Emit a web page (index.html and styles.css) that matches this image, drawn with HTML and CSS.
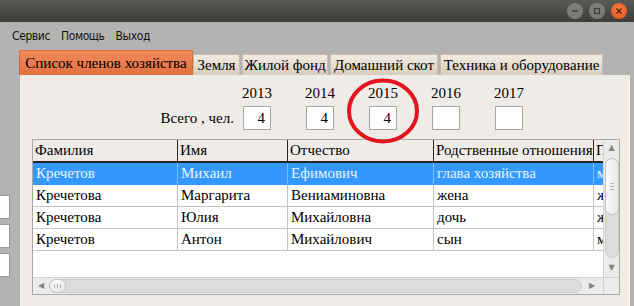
FILE: index.html
```html
<!DOCTYPE html>
<html lang="ru">
<head>
    <meta charset="UTF-8">
    <title>Хозяйство</title>
    <link rel="stylesheet" href="styles.css">
</head>
<body>
    <div class="titlebar">
        <span class="wbtn">
            <svg width="8" height="8" viewBox="0 0 8 8"><line x1="1" y1="4" x2="7" y2="4" stroke="#3c3b37" stroke-width="1.4"/></svg>
        </span>
        <span class="wbtn">
            <svg width="8" height="8" viewBox="0 0 8 8"><rect x="1.5" y="1.5" width="5" height="5" fill="none" stroke="#3c3b37" stroke-width="1.2"/></svg>
        </span>
        <span class="wbtn close">
            <svg width="8" height="8" viewBox="0 0 8 8"><path d="M1.5 1.5 L6.5 6.5 M6.5 1.5 L1.5 6.5" stroke="#5a2108" stroke-width="1.4"/></svg>
        </span>
    </div>

    <nav class="menubar">
        <span>Сервис</span>
        <span>Помощь</span>
        <span>Выход</span>
    </nav>

    <div class="window-body">
        <div class="side">
            <div class="stub"></div>
            <div class="stub"></div>
            <div class="stub"></div>
        </div>

        <div class="panel">
            <div class="tabs">
                <div class="tab active">Список членов хозяйства</div>
                <div class="tab tab-land">Земля</div>
                <div class="tab tab-housing">Жилой фонд</div>
                <div class="tab tab-cattle">Домашний скот</div>
                <div class="tab tab-machines">Техника и оборудование</div>
            </div>

            <div class="page">
                <div class="totals">
                    <div class="totals-label">Всего , чел.</div>
                    <div class="years">
                        <div class="year"><span>2013</span><input class="count" value="4" readonly></div>
                        <div class="year"><span>2014</span><input class="count" value="4" readonly></div>
                        <div class="year"><span>2015</span><input class="count" value="4" readonly></div>
                        <div class="year"><span>2016</span><input class="count" value="" readonly></div>
                        <div class="year"><span>2017</span><input class="count" value="" readonly></div>
                    </div>
                </div>

                <div class="grid">
                    <div class="grid-data">
                        <div class="grid-row head">
                            <span>Фамилия</span><span>Имя</span><span>Отчество</span><span>Родственные отношения</span><span>Пол</span>
                        </div>
                        <div class="grid-row selected">
                            <span>Кречетов</span><span>Михаил</span><span>Ефимович</span><span>глава хозяйства</span><span>мужской</span>
                        </div>
                        <div class="grid-row">
                            <span>Кречетова</span><span>Маргарита</span><span>Вениаминовна</span><span>жена</span><span>женский</span>
                        </div>
                        <div class="grid-row">
                            <span>Кречетова</span><span>Юлия</span><span>Михайловна</span><span>дочь</span><span>женский</span>
                        </div>
                        <div class="grid-row">
                            <span>Кречетов</span><span>Антон</span><span>Михайлович</span><span>сын</span><span>мужской</span>
                        </div>
                    </div>

                    <div class="vscroll">
                        <div class="arrow">&#9650;</div>
                        <div class="vtrack">
                            <div class="vthumb"><i></i><i></i><i></i></div>
                        </div>
                        <div class="arrow">&#9660;</div>
                    </div>

                    <div class="hscroll">
                        <div class="arrow">&#9664;</div>
                        <div class="htrack">
                            <div class="hthumb"><i></i><i></i><i></i></div>
                        </div>
                        <div class="arrow">&#9654;</div>
                    </div>

                    <div class="corner"></div>
                </div>
            </div>
        </div>
    </div>

    <!-- red annotation round the 2015 field -->
    <svg class="mark" width="76" height="68" viewBox="0 0 76 68">
        <ellipse cx="37" cy="33" rx="34" ry="30.5" fill="none" stroke="#e3141f" stroke-width="4"/>
    </svg>
</body>
</html>
```

FILE: styles.css
```css
body {
    margin: 0;
    width: 634px;
    height: 306px;
    overflow: hidden;
    position: relative;
    background: #b3b3b3;
    font-family: "Liberation Serif", serif;
    color: #000;
}
.titlebar {
    height: 22px;
    background: linear-gradient(#5a5955, #3e3d39);
    display: flex;
    justify-content: flex-end;
    align-items: center;
    gap: 6px;
    padding-right: 7px;
}
.wbtn {
    width: 16px;
    height: 16px;
    border-radius: 50%;
    background: #7d7c77;
    display: flex;
    align-items: center;
    justify-content: center;
}
.wbtn.close {
    background: radial-gradient(circle at 50% 35%, #f57c47, #e05419);
}
.menubar {
    height: 28px;
    display: flex;
    align-items: center;
    gap: 11px;
    padding-left: 12px;
    font-family: "DejaVu Sans Condensed", "DejaVu Sans", sans-serif;
    font-stretch: condensed;
    font-size: 12px;
    letter-spacing: -0.4px;
    color: #151515;
}
.window-body {
    display: flex;
}
.side {
    width: 20px;
    padding-top: 145px;
    display: flex;
    flex-direction: column;
    gap: 5px;
}
.stub {
    width: 10px;
    height: 24px;
    box-sizing: border-box;
    background: #fff;
    border: 1px solid #999;
    border-left: none;
}
.panel {
    width: 610px;
    display: flex;
    flex-direction: column;
}
.tabs {
    height: 25px;
    display: flex;
    align-items: flex-end;
    gap: 2px;
    margin-left: -1px;
}
.tab {
    height: 21px;
    line-height: 21px;
    box-sizing: border-box;
    text-align: center;
    white-space: nowrap;
    font-size: 15px;
    background: linear-gradient(#f1ece3, #d8cdbb);
    border: 1px solid #cbbfa9;
    border-bottom: none;
    border-radius: 2px 2px 0 0;
}
.tab.active {
    width: 174px;
    height: 25px;
    line-height: 24px;
    margin-right: -2px;
    background: linear-gradient(#f28a5c, #e2703f);
    border-color: #d66a3c;
}
.tab-land { width: 47px; }
.tab-housing { width: 86px; }
.tab-cattle { width: 108px; }
.tab-machines { width: 163px; }
.page {
    height: 240px;
    padding-top: 9px;
    background: #efebe7;
    border-right: 1px solid #f8f6f3;
    font-size: 15px;
}
.totals {
    display: flex;
    align-items: flex-end;
}
.totals-label {
    width: 214px;
    padding-right: 9px;
    text-align: right;
    line-height: 24px;
}
.years {
    display: flex;
    gap: 35px;
}
.year {
    width: 28px;
    display: flex;
    flex-direction: column;
    align-items: center;
}
.year span {
    line-height: 18px;
    margin-bottom: 4px;
}
.count {
    width: 28px;
    height: 24px;
    box-sizing: border-box;
    margin: 0;
    padding: 0 5px 0 0;
    border: 1px solid #a6a6a6;
    background: #fff;
    text-align: right;
    font-family: "Liberation Serif", serif;
    font-size: 15px;
    color: #000;
    outline: none;
}
.grid {
    width: 588px;
    box-sizing: border-box;
    margin: 9px 0 0 12px;
    display: grid;
    grid-template-columns: minmax(0, 1fr) 16px;
    grid-template-rows: 137px 17px;
    border: 1px solid #a9a9a9;
    background: #fff;
}
.grid-data {
    overflow: hidden;
}
.grid-row {
    display: grid;
    grid-template-columns: 145px 110px 146px 160px minmax(0, 1fr);
    height: 22px;
}
.grid-row span {
    padding-left: 3px;
    line-height: 21px;
    white-space: nowrap;
    overflow: hidden;
    border-right: 1px solid #c4c4c4;
    border-bottom: 1px solid #c4c4c4;
}
.grid-row span:last-child {
    border-right: none;
}
.grid-row.head {
    height: 23px;
}
.grid-row.head span {
    padding-left: 2px;
    line-height: 21px;
    background: #efece8;
    border-right-color: #262626;
    border-bottom: 2px solid #262626;
}
.grid-row.selected span {
    background: #3399ff;
    color: #eaf3ff;
    border-right-color: #7dbdff;
    border-bottom-color: #3399ff;
}
.arrow {
    width: 16px;
    height: 16px;
    line-height: 16px;
    text-align: center;
    font-family: "DejaVu Sans", sans-serif;
    font-size: 8px;
    color: #858585;
}
.vscroll {
    background: #ebebeb;
    border-left: 1px solid #d2d2d2;
    display: flex;
    flex-direction: column;
    align-items: center;
}
.vtrack {
    width: 14px;
    height: 100px;
    margin: 2px 0 2px;
    box-sizing: border-box;
    border: 1px solid #cdcdcd;
    border-radius: 7px;
    background: #dcdcdc;
}
.vthumb {
    height: 57px;
    box-sizing: border-box;
    margin: -1px;
    border: 1px solid #c3c3c3;
    border-radius: 7px;
    background: linear-gradient(90deg, #fbfbfb, #e8e8e8);
    display: flex;
    flex-direction: column;
    align-items: center;
    justify-content: center;
    gap: 2px;
}
.vthumb i {
    width: 4px;
    height: 1px;
    background: #b2b2b2;
}
.hscroll {
    background: #ebebeb;
    border-top: 1px solid #d2d2d2;
    display: flex;
    align-items: center;
}
.htrack {
    width: 533px;
    height: 14px;
    margin-right: 2px;
    box-sizing: border-box;
    border: 1px solid #cdcdcd;
    border-radius: 7px;
    background: #dcdcdc;
}
.hthumb {
    width: 17px;
    height: 14px;
    box-sizing: border-box;
    margin: -1px;
    border: 1px solid #c3c3c3;
    border-radius: 7px;
    background: linear-gradient(#fbfbfb, #e8e8e8);
    display: flex;
    align-items: center;
    justify-content: center;
    gap: 2px;
}
.hthumb i {
    width: 1px;
    height: 4px;
    background: #b2b2b2;
}
.corner {
    background: #ebebeb;
    border-top: 1px solid #d2d2d2;
    border-left: 1px solid #d2d2d2;
}
.mark {
    position: absolute;
    left: 346px;
    top: 78px;
}
```
